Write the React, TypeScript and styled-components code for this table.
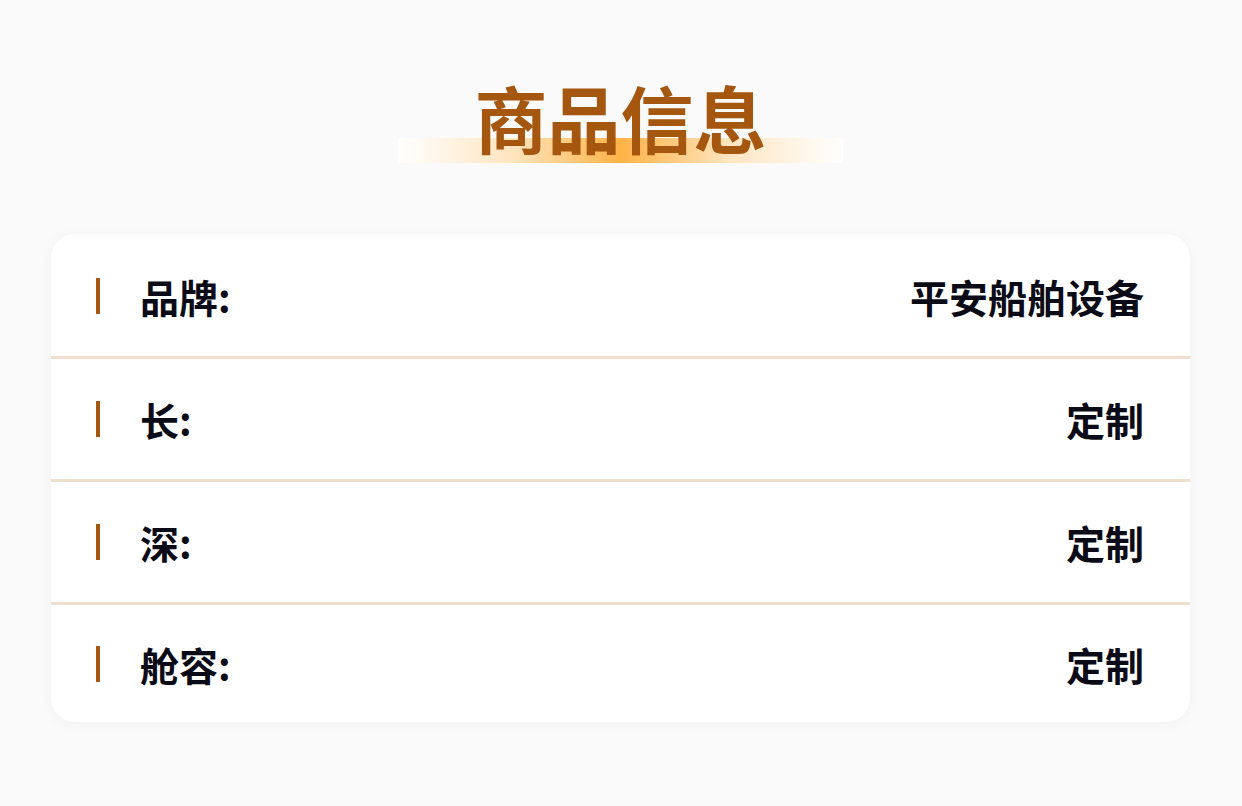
import React from "react";
import styled, { createGlobalStyle } from "styled-components";

const Global = createGlobalStyle`
  html, body { margin: 0; padding: 0; background: #fafafa; }
  body { font-family: "Noto Sans CJK SC", "Noto Sans", sans-serif; }
`;

const Page = styled.div`
  width: 1242px;
  min-height: 806px;
  box-sizing: border-box;
  padding: 70px 52px 0 51px;
  display: flex;
  flex-direction: column;
  align-items: center;
`;

const TitleWrap = styled.div`
  position: relative;
  display: flex;
  justify-content: center;
  width: 445px;
  height: 92px;
  margin-bottom: 72px;
`;

const TitleGlow = styled.div`
  position: absolute;
  left: 0;
  right: 0;
  bottom: -1px;
  height: 25px;
  background: linear-gradient(90deg, #ffffff 0%, #ffe6c2 25%, #ffb347 50%, #ffe6c2 75%, #ffffff 100%);
`;

const Title = styled.h1`
  position: relative;
  margin: 0;
  font-size: 73px;
  line-height: 92px;
  font-weight: 700;
  color: #a5560f;
`;

const Card = styled.div`
  width: 100%;
  background: #ffffff;
  border-radius: 24px;
  box-shadow: 0 2px 14px rgba(0, 0, 0, 0.04);
  padding-top: 2px;
  display: flex;
  flex-direction: column;
  overflow: hidden;
`;

const Row = styled.div`
  height: 123px;
  box-sizing: border-box;
  display: flex;
  align-items: center;
  padding: 0 46px 0 45px;
  border-bottom: 3px solid #efdfcf;
  &:last-child { border-bottom: none; height: 117px; }
`;

const Accent = styled.span`
  width: 4px;
  height: 36px;
  background: #a5560f;
  margin-right: 40px;
  flex-shrink: 0;
`;

const Label = styled.span`
  flex: 1;
  font-size: 39px;
  font-weight: 700;
  color: #0a0b16;
`;

const Value = styled.span`
  font-size: 39px;
  font-weight: 700;
  color: #0a0b16;
`;

const rows = [
  { label: "品牌:", value: "平安船舶设备" },
  { label: "长:", value: "定制" },
  { label: "深:", value: "定制" },
  { label: "舱容:", value: "定制" },
];

export default function App() {
  return (
    <>
      <Global />
      <Page>
        <TitleWrap>
          <TitleGlow />
          <Title>商品信息</Title>
        </TitleWrap>
        <Card>
          {rows.map((r) => (
            <Row key={r.label}>
              <Accent />
              <Label>{r.label}</Label>
              <Value>{r.value}</Value>
            </Row>
          ))}
        </Card>
      </Page>
    </>
  );
}
